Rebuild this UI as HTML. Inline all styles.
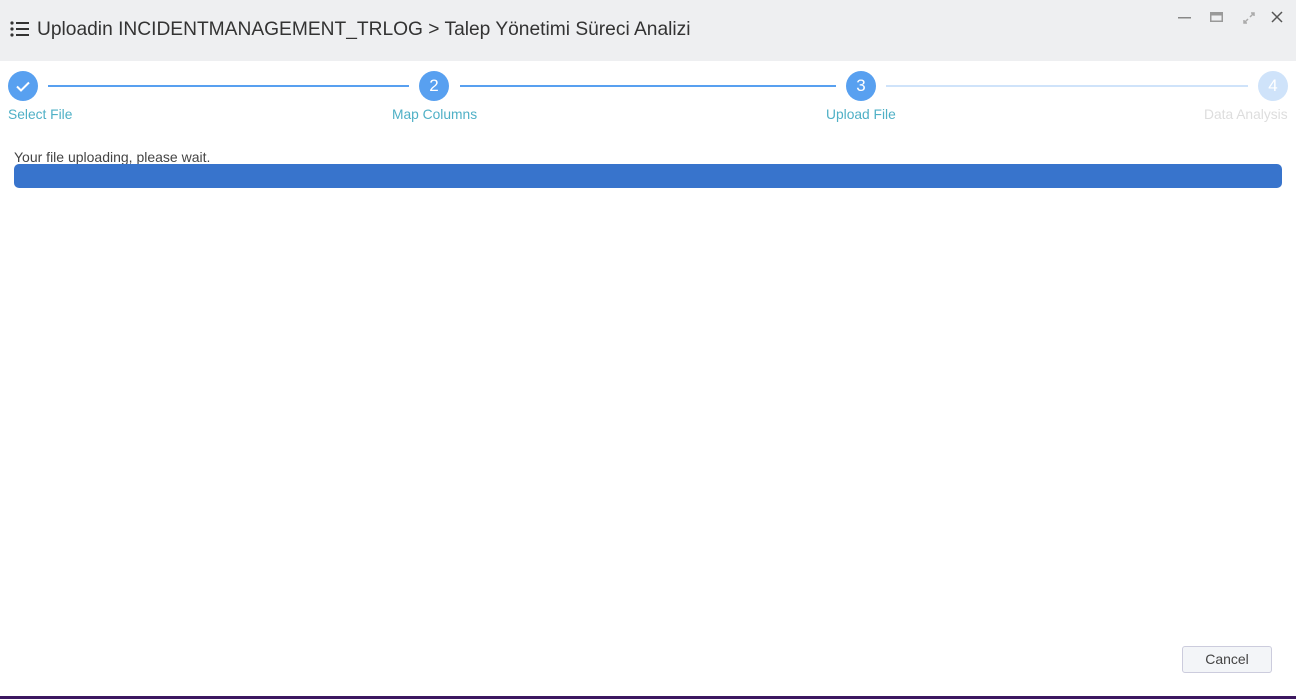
<!DOCTYPE html>
<html><head><meta charset="utf-8"><style>
*{margin:0;padding:0;box-sizing:border-box}
body{width:1296px;height:699px;overflow:hidden;background:#fff;font-family:"Liberation Sans",sans-serif;position:relative}
.hdr{position:absolute;left:0;top:0;width:1296px;height:61px;background:#eeeff1}
.title{position:absolute;left:37px;top:19px;font-size:19.2px;color:#333;white-space:nowrap}
.abs{position:absolute}
.circ{position:absolute;width:30px;height:30px;border-radius:50%;background:#58a0f0;color:#fff;font-size:17px;text-align:center;line-height:30px;top:71px}
.line{position:absolute;height:2px;top:85px;background:#58a0f0}
.lbl{position:absolute;top:107px;font-size:13.8px;color:#4fb0c6;white-space:nowrap}
</style></head><body>
<div class="hdr">
<svg class="abs" style="left:10px;top:20px" width="20" height="18" viewBox="0 0 20 18">
<g fill="#333"><circle cx="2" cy="3" r="1.6"/><circle cx="2" cy="9" r="1.6"/><circle cx="2" cy="15" r="1.6"/>
<rect x="6" y="2" width="13" height="2"/><rect x="6" y="8" width="13" height="2"/><rect x="6" y="14" width="13" height="2"/></g></svg>
<div class="title">Uploadin INCIDENTMANAGEMENT_TRLOG &gt; Talep Yönetimi Süreci Analizi</div>
<svg class="abs" style="left:1178px;top:16px" width="14" height="4"><rect x="0" y="1" width="13" height="1.5" fill="#888"/></svg>
<svg class="abs" style="left:1210px;top:11px" width="14" height="12"><rect x="0.75" y="1.75" width="11.5" height="8.5" fill="none" stroke="#999" stroke-width="1.5"/><rect x="1" y="2" width="11" height="2.5" fill="#999"/></svg>
<svg class="abs" style="left:1242px;top:11px" width="14" height="14" viewBox="0 0 14 14"><g stroke="#aaa" stroke-width="1.5" fill="none"><path d="M8 6L12 2M9 2h3v3M6 8L2 12M2 9v3h3"/></g></svg>
<svg class="abs" style="left:1271px;top:11px" width="12" height="12"><path d="M1 1L11 11M11 1L1 11" stroke="#555" stroke-width="1.5"/></svg>
</div>
<div class="circ" style="left:8px"><svg width="30" height="30"><path d="M9 15.5l4 4 8-8" stroke="#fff" stroke-width="2" fill="none"/></svg></div>
<div class="line" style="left:48px;width:361px"></div>
<div class="circ" style="left:419px">2</div>
<div class="line" style="left:460px;width:376px"></div>
<div class="circ" style="left:846px">3</div>
<div class="line" style="left:886px;width:362px;background:#cfe3fa"></div>
<div class="circ" style="left:1258px;background:#cfe3fa">4</div>
<div class="lbl" style="left:8px">Select File</div>
<div class="lbl" style="left:392px">Map Columns</div>
<div class="lbl" style="left:826px">Upload File</div>
<div class="lbl" style="left:1204px;color:#ddd">Data Analysis</div>
<div class="abs" style="left:14px;top:149px;font-size:14px;color:#444">Your file uploading, please wait.</div>
<div class="abs" style="left:14px;top:164px;width:1268px;height:24px;background:#3874cc;border-radius:5px"></div>
<div class="abs" style="left:1182px;top:646px;width:90px;height:27px;border:1px solid #ccd;border-radius:3px;background:#f3f5f8;font-size:14px;color:#444;text-align:center;line-height:25px">Cancel</div>
<div class="abs" style="left:0;top:696px;width:1296px;height:3px;background:#3c1760"></div>
</body></html>
